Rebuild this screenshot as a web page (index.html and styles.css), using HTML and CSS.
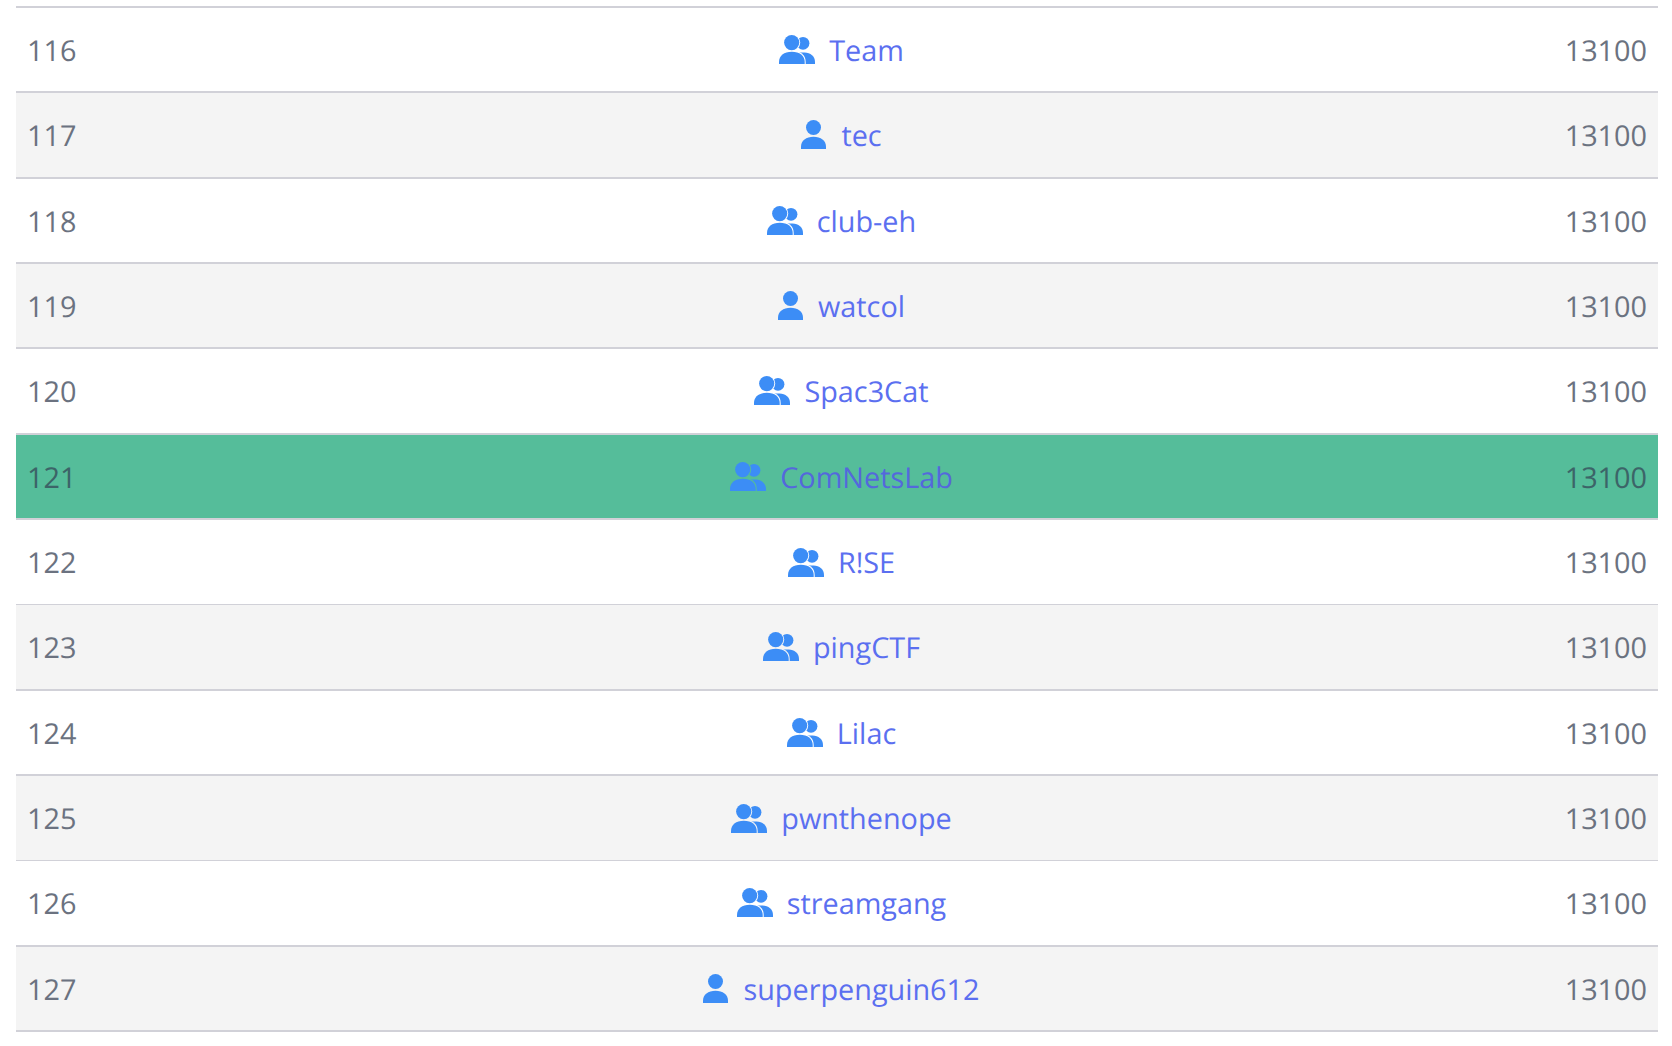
FILE: index.html
```html
<!DOCTYPE html>
<html lang="en">
<head>
<meta charset="utf-8">
<title>Scoreboard</title>
<link rel="stylesheet" href="styles.css">
</head>
<body>
<svg class="defs" width="0" height="0" aria-hidden="true">
  <defs>
    <mask id="team-cut" maskUnits="userSpaceOnUse" x="0" y="0" width="36" height="29">
      <rect width="36" height="29" fill="#fff"/>
      <circle cx="12.700" cy="7.600" r="8.500" fill="#000"/>
      <path d="M-1 30v-3C-1 19.500 4.500 15.700 12.800 15.700S26.700 19.500 26.700 27v3z" fill="#000"/>
    </mask>
  </defs>
  <symbol id="user" viewBox="0 0 25 29"><circle cx="12.500" cy="7.500" r="7.500"/><path d="M0 29v-2.500C0 20.500 5.200 16.700 12.500 16.700S25 20.500 25 26.500V29z"/></symbol>
  <symbol id="team" viewBox="0 0 36 29">
    <circle cx="12.700" cy="7.600" r="7.600"/>
    <path d="M0 29v-2C0 20.500 5 16.700 12.800 16.700S25.700 20.500 25.700 27v2z"/>
    <g mask="url(#team-cut)">
      <circle cx="24" cy="8.300" r="6.400"/>
      <path d="M18 29V17.600h7.500C31.500 17.600 36 21.500 36 27v2z"/>
    </g>
  </symbol>
</svg>
<div class="board">
  <div class="row"><span class="rank">116</span><span class="name"><svg class="ico team"><use href="#team"/></svg><a>Team</a></span><span class="score">13100</span></div>
  <div class="row alt"><span class="rank">117</span><span class="name"><svg class="ico user"><use href="#user"/></svg><a>tec</a></span><span class="score">13100</span></div>
  <div class="row"><span class="rank">118</span><span class="name"><svg class="ico team"><use href="#team"/></svg><a>club-eh</a></span><span class="score">13100</span></div>
  <div class="row alt"><span class="rank">119</span><span class="name"><svg class="ico user"><use href="#user"/></svg><a>watcol</a></span><span class="score">13100</span></div>
  <div class="row"><span class="rank">120</span><span class="name"><svg class="ico team"><use href="#team"/></svg><a>Spac3Cat</a></span><span class="score">13100</span></div>
  <div class="row mine"><span class="rank">121</span><span class="name"><svg class="ico team"><use href="#team"/></svg><a>ComNetsLab</a></span><span class="score">13100</span></div>
  <div class="row thin"><span class="rank">122</span><span class="name"><svg class="ico team"><use href="#team"/></svg><a>R!SE</a></span><span class="score">13100</span></div>
  <div class="row alt"><span class="rank">123</span><span class="name"><svg class="ico team"><use href="#team"/></svg><a>pingCTF</a></span><span class="score">13100</span></div>
  <div class="row"><span class="rank">124</span><span class="name"><svg class="ico team"><use href="#team"/></svg><a>Lilac</a></span><span class="score">13100</span></div>
  <div class="row alt thin"><span class="rank">125</span><span class="name"><svg class="ico team"><use href="#team"/></svg><a>pwnthenope</a></span><span class="score">13100</span></div>
  <div class="row"><span class="rank">126</span><span class="name"><svg class="ico team"><use href="#team"/></svg><a>streamgang</a></span><span class="score">13100</span></div>
  <div class="row alt"><span class="rank">127</span><span class="name"><svg class="ico user"><use href="#user"/></svg><a>superpenguin612</a></span><span class="score">13100</span></div>
</div>
</body>
</html>
```
FILE: styles.css
```css
html, body { margin: 0; padding: 0; background: #fff; }
body { height: 1046px; overflow: hidden; }
.defs { position: absolute; }
.board {
  margin: 6px 14px 0 16px;
  border-top: 2px solid #d1d1d8;
  font-family: "Open Sans", sans-serif;
  font-size: 28.8px;
  color: #6b7280;
  text-rendering: geometricPrecision;
}
.row {
  display: grid;
  grid-template-columns: 171px 1fr 162px;
  align-items: center;
  height: 83.33px;
  padding: 0 11px;
  border-bottom: 2px solid #d1d1d8;
  background: #fff;
}
.thin { height: 84.33px; border-bottom-width: 1px; }
.alt { background: #f4f4f4; }
.mine { background: #55bd9a; color: #3c6468; }
.rank, .score, .name a { padding-top: 1.5px; }
.rank { text-align: left; }
.score { text-align: right; }
.name { display: flex; align-items: center; justify-content: center; gap: 14px; }
.name a { color: #5b6ff0; }
.mine .name a { color: #5468dc; }
.ico { fill: #3c8df6; flex: none; }
.team { width: 36px; height: 29px; }
.user { width: 25px; height: 29px; margin-right: 1px; }
```
